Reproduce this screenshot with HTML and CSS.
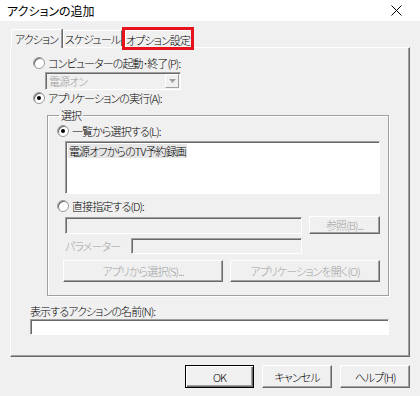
FILE: index.html
```html
<!DOCTYPE html>
<html lang="ja">

<head>
  <meta charset="UTF-8">
  <title>アクションの追加</title>
  <link rel="stylesheet" href="styles.css">
</head>

<body>
  <div class="titlebar">
    <span>アクションの追加</span>
    <svg class="close" width="11" height="11" viewBox="0 0 11 11">
      <path d="M0.5 0.5 L10.5 10.5 M10.5 0.5 L0.5 10.5" stroke="#000" stroke-width="1" fill="none" />
    </svg>
  </div>

  <div class="dialog">
    <div class="tabs">
      <div class="tab active">アクション</div>
      <div class="tab sched">スケジュール</div>
      <div class="tab marked">オプション設定</div>
    </div>

    <div class="panel">
      <div class="opt">
        <span class="radio"></span>
        <span>コンピューターの起動･終了(P):</span>
      </div>
      <div class="combo">
        <span>電源オン</span>
        <span class="combo-btn">
          <svg width="7" height="4" viewBox="0 0 7 4"><path d="M0 0 H7 L3.5 4 Z" fill="#a0a0a0" /></svg>
        </span>
      </div>

      <div class="opt second">
        <span class="radio checked"></span>
        <span>アプリケーションの実行(A):</span>
      </div>

      <fieldset class="group">
        <legend>選択</legend>
        <div class="opt">
          <span class="radio checked"></span>
          <span>一覧から選択する(L):</span>
        </div>
        <div class="listbox">
          <span class="item">電源オフからのTV予約録画</span>
        </div>

        <div class="opt direct">
          <span class="radio"></span>
          <span>直接指定する(D):</span>
        </div>
        <div class="row path-row">
          <div class="field off path"></div>
          <button class="btn off browse" type="button">参照(B)...</button>
        </div>
        <div class="row param-row">
          <span class="muted param-label">パラメーター</span>
          <div class="field off param"></div>
        </div>
        <div class="row app-row">
          <button class="btn off pick" type="button">アプリから選択(S)...</button>
          <button class="btn off open" type="button">アプリケーションを開く(O)</button>
        </div>
      </fieldset>

      <div class="name-label">表示するアクションの名前(N):</div>
      <div class="field name"></div>
    </div>

    <div class="actions">
      <button class="btn ok" type="button">OK</button>
      <button class="btn cancel" type="button">キャンセル</button>
      <button class="btn help" type="button">ヘルプ(H)</button>
    </div>
  </div>
</body>

</html>
```

FILE: styles.css
```css
* {
  box-sizing: border-box;
  font-family: "Noto Sans CJK JP", "Noto Sans", sans-serif;
  font-feature-settings: "palt";
}

body {
  margin: 0;
  width: 420px;
  height: 396px;
  background: #f0f0f0;
  font-size: 11px;
  font-weight: 300;
  letter-spacing: -0.9px;
  line-height: 14px;
  color: #000;
  overflow: hidden;
}

.titlebar {
  height: 21px;
  background: #fff;
  display: flex;
  justify-content: space-between;
  align-items: center;
  padding: 0 18px 0 7px;
  font-size: 12px;
  font-weight: 400;
  letter-spacing: 0;
  font-feature-settings: normal;
}

.dialog {
  padding: 7px 10px 0 10px;
}

/* tabs */
.tabs {
  display: flex;
  align-items: flex-end;
  height: 19px;
  padding-left: 1px;
  position: relative;
  z-index: 1;
}

.tab {
  height: 16px;
  padding-top: 1px;
  text-align: center;
  white-space: nowrap;
  border-top: 1px solid #fff;
  border-left: 1px solid #fff;
  border-right: 1px solid #696969;
  margin-bottom: 1px;
}

.tab.active {
  width: 51px;
  height: 19px;
  padding-top: 2px;
  margin-bottom: -1px;
  background: #f0f0f0;
  border-right: 1px solid #a0a0a0;
  box-shadow: 1px 0 0 #696969;
  margin-right: 1px;
}

.tab.sched {
  width: 59px;
}

.tab.marked {
  width: 66px;
  height: 17px;
  margin: 0 0 0 3px;
  padding-top: 2px;
  outline: 3px solid #e8121c;
  border-right-color: transparent;
}

/* panel */
.panel {
  height: 310px;
  border-top: 1px solid #fff;
  border-left: 1px solid #fff;
  border-right: 1px solid #696969;
  border-bottom: 1px solid #696969;
  box-shadow: inset -1px -1px 0 #a0a0a0;
  padding: 8px 0 0 19px;
}

.opt {
  display: flex;
  align-items: center;
  gap: 3px;
  height: 14px;
  margin-left: 3px;
}

.opt.second {
  margin-top: 1px;
}

.radio {
  width: 12px;
  height: 12px;
  border-radius: 50%;
  background: #fff;
  border: 1px solid #9a9a9a;
  box-shadow: inset 1px 1px 0 #6a6a6a;
  display: flex;
  align-items: center;
  justify-content: center;
}

.radio.checked::after {
  content: "";
  width: 4px;
  height: 4px;
  border-radius: 50%;
  background: #000;
}

.combo {
  width: 136px;
  height: 18px;
  margin: 2px 0 0 15px;
  display: flex;
  justify-content: space-between;
  align-items: center;
  color: #a0a0a0;
  background: #f0f0f0;
  border-top: 1px solid #a0a0a0;
  border-left: 1px solid #a0a0a0;
  border-right: 1px solid #fff;
  border-bottom: 1px solid #fff;
  box-shadow: inset 1px 1px 0 #696969;
  padding: 0 1px 0 3px;
}

.combo-btn {
  width: 14px;
  height: 14px;
  display: flex;
  align-items: center;
  justify-content: center;
  border-right: 1px solid #a0a0a0;
  border-bottom: 1px solid #a0a0a0;
  border-top: 1px solid #fff;
  border-left: 1px solid #fff;
}

/* group */
.group {
  width: 342px;
  margin: 3px 0 0 17px;
  padding: 0 0 13px 9px;
  border: 1px solid #a0a0a0;
  box-shadow: inset 1px 1px 0 #fff, 1px 1px 0 #fff;
}

.group legend {
  padding: 0 2px;
  margin-left: 2px;
}

.group .opt {
  margin-left: 0;
  margin-top: 2px;
}

.group .opt.direct {
  margin-top: 5px;
}

.listbox {
  width: 315px;
  height: 53px;
  margin: 3px 0 0 8px;
  background: #fff;
  border-top: 1px solid #a0a0a0;
  border-left: 1px solid #a0a0a0;
  border-right: 1px solid #fff;
  border-bottom: 1px solid #fff;
  box-shadow: inset 1px 1px 0 #696969;
  padding: 2px 0 0 2px;
}

.listbox .item {
  display: inline-block;
  background: #e6e6e6;
  padding: 0 1px;
}

.row {
  display: flex;
  align-items: center;
}

.field {
  height: 17px;
  background: #fff;
  border-top: 1px solid #a0a0a0;
  border-left: 1px solid #a0a0a0;
  border-right: 1px solid #fff;
  border-bottom: 1px solid #fff;
  box-shadow: inset 1px 1px 0 #696969;
}

.field.off {
  background: #f0f0f0;
}

.muted {
  color: #a0a0a0;
}

.path-row {
  margin: 3px 0 0 8px;
  gap: 7px;
}

.path {
  width: 237px;
}

.param-row {
  margin: 4px 0 0 8px;
}

.param-label {
  width: 66px;
}

.param {
  width: 171px;
  height: 16px;
}

.app-row {
  margin: 6px 0 0 6px;
  gap: 7px;
}

/* buttons */
.btn {
  height: 22px;
  margin: 0;
  padding: 0;
  font-size: 11px;
  font-weight: 300;
  letter-spacing: -0.9px;
  color: #000;
  background: #f0f0f0;
  border-top: 1px solid #fff;
  border-left: 1px solid #fff;
  border-right: 1px solid #696969;
  border-bottom: 1px solid #696969;
  box-shadow: inset -1px -1px 0 #a0a0a0;
}

.btn.off {
  color: #a0a0a0;
}

.browse {
  width: 71px;
  height: 18px;
}

.pick {
  width: 160px;
}

.open {
  width: 150px;
}

.name-label {
  margin-top: 8px;
}

.name {
  width: 359px;
  height: 16px;
  margin-top: 1px;
}

.actions {
  display: flex;
  justify-content: flex-end;
  gap: 8px;
  margin-top: 8px;
}

.ok {
  width: 69px;
  height: 23px;
  border: 1px solid #000;
  box-shadow: inset 1px 1px 0 #fff, inset -1px -1px 0 #696969, inset -2px -2px 0 #a0a0a0;
}

.cancel,
.help {
  width: 70px;
  height: 23px;
}
```
